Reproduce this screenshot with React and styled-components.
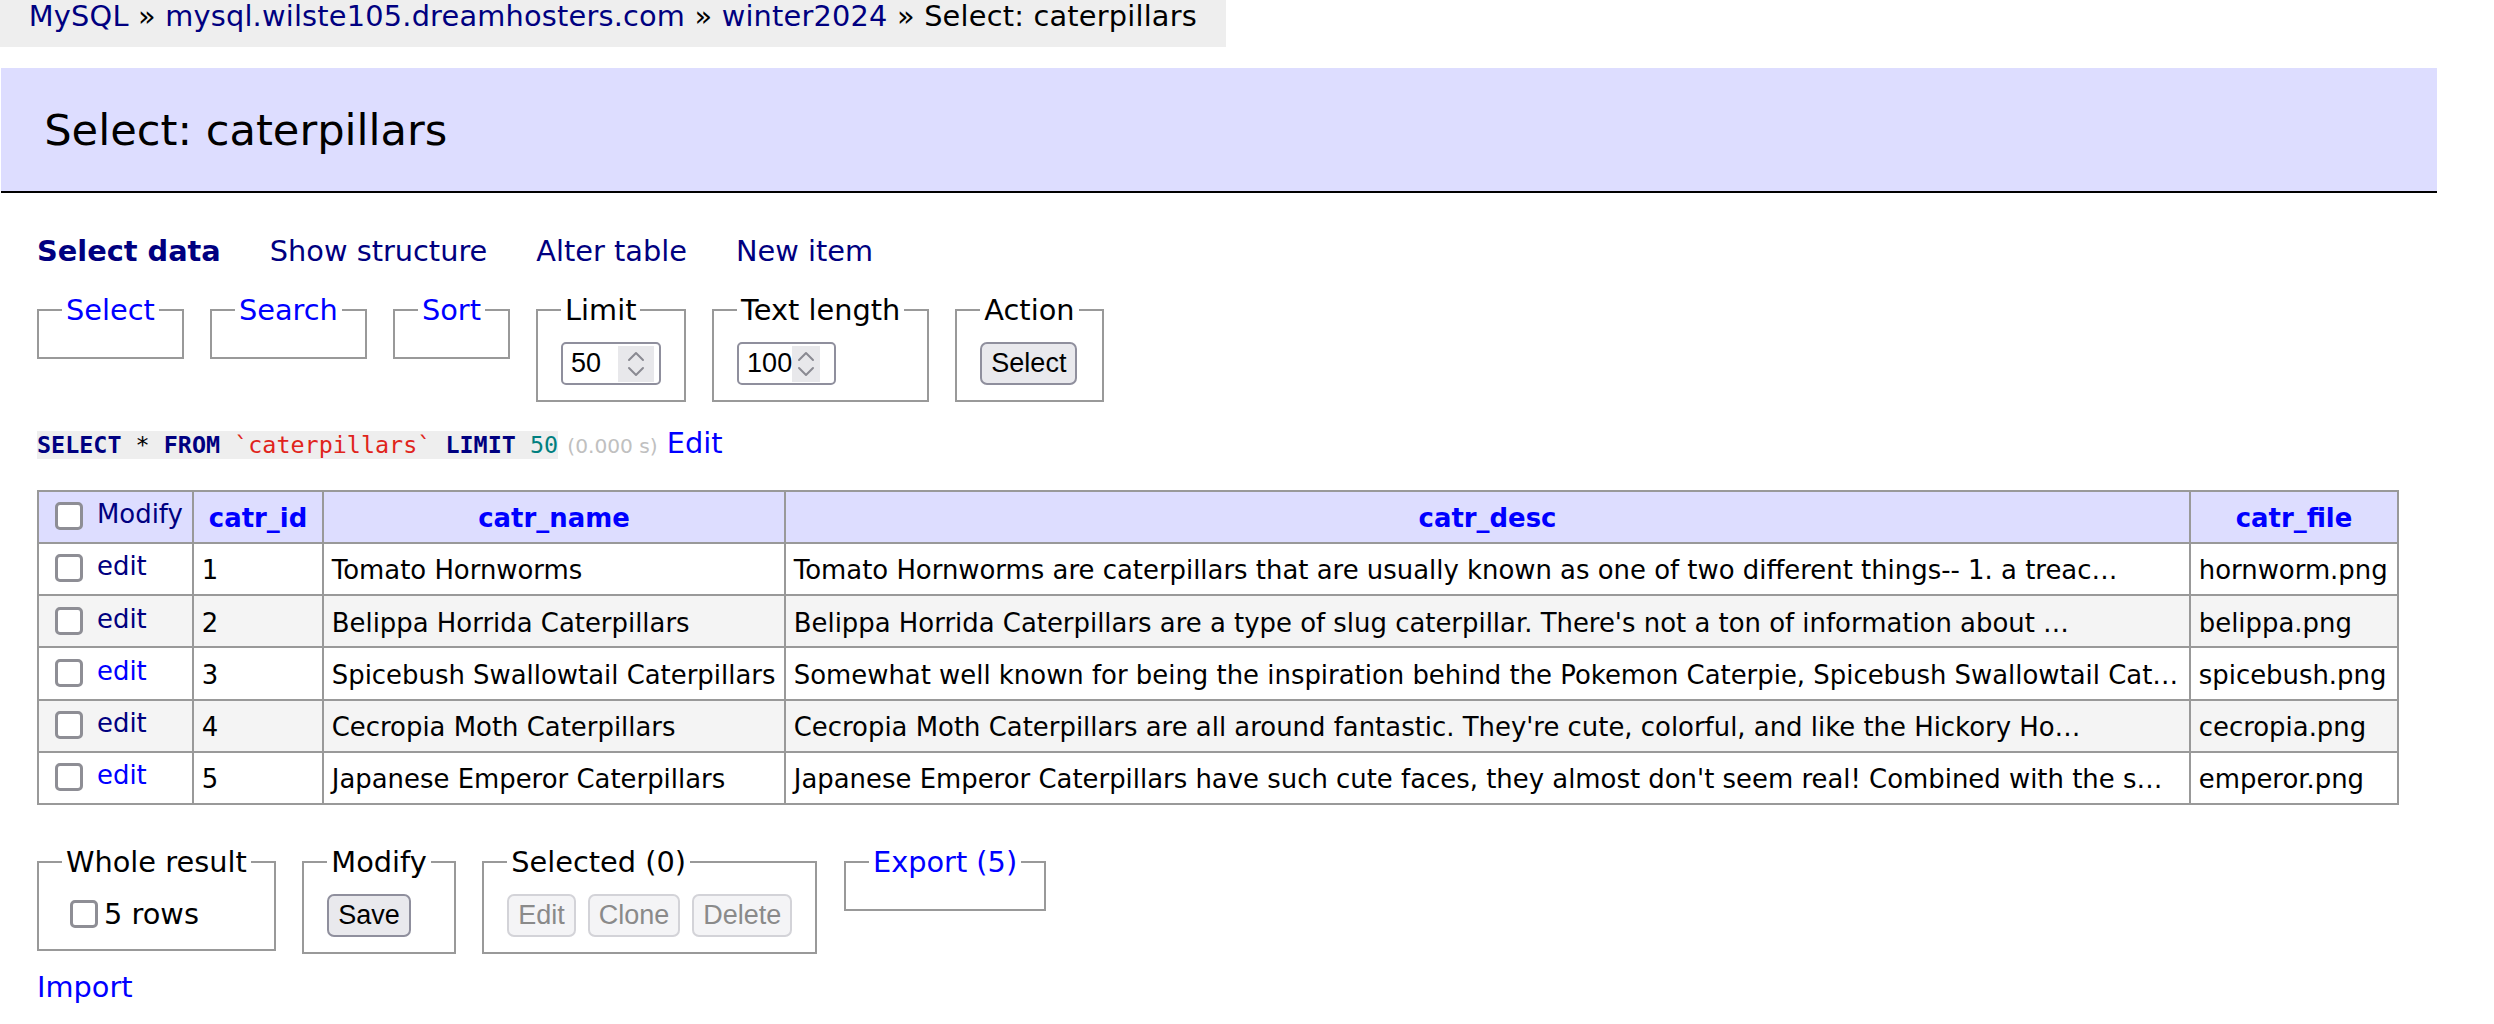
import React from "react";
import styled, { createGlobalStyle } from "styled-components";

const GlobalStyle = createGlobalStyle`
  html, body { margin: 0; padding: 0; background: #fff; }
  body {
    color: #000;
    font: 28.8px/36px "DejaVu Sans", Verdana, sans-serif;
  }
`;

const Page = styled.div`
  width: 2494px;
`;

const Breadcrumb = styled.div`
  width: fit-content;
  height: 47px;
  line-height: 33.5px;
  padding: 0 28.8px;
  background: #eee;
  white-space: nowrap;
  letter-spacing: 0.2px;
`;

const Crumb = styled.a`
  color: #000080;
  text-decoration: none;
`;

const Content = styled.div`
  margin-top: 21px;
  padding: 0 57px 0 37px;
`;

const Heading = styled.h2`
  margin: 0 0 40px -36px;
  padding: 34.56px 43.2px;
  font-size: 43.2px;
  line-height: 54px;
  font-weight: normal;
  background: #ddf;
  border-bottom: 2px solid #000;
`;

const Links = styled.p`
  display: flex;
  gap: 49px;
  margin: 0;
`;

const NavLink = styled.a`
  color: #000080;
  text-decoration: none;
  font-weight: ${(p) => (p.$active ? "bold" : "normal")};
`;

const FieldRow = styled.div`
  display: flex;
  align-items: flex-start;
  gap: ${(p) => p.$gap || "26px"};
  margin-top: ${(p) => p.$top || "0"};
`;

const Box = styled.fieldset`
  margin: 23px 0 0;
  padding: 14.4px 23.04px;
  border: 2px solid #999;
  min-inline-size: 0;
`;

const Legend = styled.legend`
  padding: 0 4px;
  line-height: 36px;
  color: #000;
`;

const BlueLink = styled.a`
  color: #00f;
  text-decoration: none;
`;

const NumberBox = styled.span`
  display: inline-flex;
  align-items: center;
  box-sizing: border-box;
  width: ${(p) => p.$w}px;
  height: 43px;
  padding-left: 8px;
  padding-right: ${(p) => p.$right}px;
  border: 2px solid #8f8f9d;
  border-radius: 5px;
  background: #fff;
  font: 27px/1 "Liberation Sans", Arial, sans-serif;
  color: #000;
  vertical-align: top;
`;

const NumberValue = styled.span`
  flex: 1;
`;

const Spinner = styled.span`
  display: flex;
  width: ${(p) => p.$w}px;
  height: 36px;
  background: #e8e8eb;
  align-items: center;
  justify-content: center;
`;

const Button = styled.button`
  box-sizing: border-box;
  height: 43px;
  padding: 0 9px;
  border: 2px solid ${(p) => (p.disabled ? "#d3d3d8" : "#8f8f9d")};
  border-radius: 7px;
  background: ${(p) => (p.disabled ? "#f4f4f6" : "#e9e9ed")};
  color: ${(p) => (p.disabled ? "#8a8a8a" : "#000")};
  font: 27px/1 "Liberation Sans", Arial, sans-serif;
  vertical-align: top;
`;

const ButtonRow = styled.div`
  display: flex;
  gap: 12px;
`;

const SqlLine = styled.p`
  margin: 23px 0 0;
`;

const Code = styled.code`
  font: 23.4px "DejaVu Sans Mono", Menlo, monospace;
  background: #eee;
`;

const Kw = styled.a`
  color: #000080;
  font-weight: bold;
  text-decoration: none;
`;

const Ident = styled.span`
  color: #e0241b;
`;

const Num = styled.span`
  color: #007f7f;
`;

const Time = styled.span`
  color: #c0c0c0;
  font-size: 20.16px;
`;

const Grid = styled.table`
  margin-top: 25.9px;
  border-collapse: collapse;
  table-layout: fixed;
  width: 2360px;
  font-size: 25.92px;
  line-height: 32.4px;
`;

const HeadRow = styled.tr`
  background: #ddf;
`;

const Row = styled.tr`
  background: ${(p) => (p.$alt ? "#f4f4f4" : "#fff")};
`;

const Cell = styled.td`
  border: 2px solid #999;
  padding: 10.4px 7.78px 7.4px;
  white-space: nowrap;
  overflow: hidden;
  text-align: left;
`;

const HeadCell = styled.th`
  border: 2px solid #999;
  padding: 10.4px 12.96px 7.4px;
  white-space: nowrap;
  overflow: hidden;
  text-align: center;
  font-weight: bold;
`;

const ColLink = styled.a`
  color: #00f;
  text-decoration: none;
`;

const RowLink = styled.a`
  color: ${(p) => (p.$visited ? "#000080" : "#00f")};
  text-decoration: none;
  line-height: 22px;
  vertical-align: 4px;
`;

const Check = styled.input.attrs({ type: "checkbox" })`
  appearance: none;
  -webkit-appearance: none;
  box-sizing: border-box;
  width: 28px;
  height: 28px;
  margin: 0 6px 0 8px;
  border: 3.5px solid #8e8e95;
  border-radius: 5px;
  background: #fff;
  vertical-align: ${(p) => p.$va || "-3px"};
`;

const CheckLabel = styled.label`
  display: block;
  line-height: 40px;
`;

const ImportLine = styled.p`
  margin: 15px 0 0;
`;

const SpinIcon = ({ w }) => {
  const c = w / 2;
  return (
    <svg width={w} height="36" viewBox={`0 0 ${w} 36`} fill="none">
      <path d={`M${c - 7} 14 L${c} 7 L${c + 7} 14`} stroke="#8a8a92" strokeWidth="2" strokeLinecap="round" strokeLinejoin="round" />
      <path d={`M${c - 7} 22 L${c} 29 L${c + 7} 22`} stroke="#8a8a92" strokeWidth="2" strokeLinecap="round" strokeLinejoin="round" />
    </svg>
  );
};

const rows = [
  {
    id: 1,
    name: "Tomato Hornworms",
    desc: "Tomato Hornworms are caterpillars that are usually known as one of two different things-- 1. a treac…",
    file: "hornworm.png",
    visited: true,
  },
  {
    id: 2,
    name: "Belippa Horrida Caterpillars",
    desc: "Belippa Horrida Caterpillars are a type of slug caterpillar. There's not a ton of information about …",
    file: "belippa.png",
    visited: true,
  },
  {
    id: 3,
    name: "Spicebush Swallowtail Caterpillars",
    desc: "Somewhat well known for being the inspiration behind the Pokemon Caterpie, Spicebush Swallowtail Cat…",
    file: "spicebush.png",
    visited: false,
  },
  {
    id: 4,
    name: "Cecropia Moth Caterpillars",
    desc: "Cecropia Moth Caterpillars are all around fantastic. They're cute, colorful, and like the Hickory Ho…",
    file: "cecropia.png",
    visited: true,
  },
  {
    id: 5,
    name: "Japanese Emperor Caterpillars",
    desc: "Japanese Emperor Caterpillars have such cute faces, they almost don't seem real! Combined with the s…",
    file: "emperor.png",
    visited: false,
  },
];

export default function App() {
  return (
    <Page>
      <GlobalStyle />
      <Breadcrumb>
        <Crumb href="#">MySQL</Crumb> » <Crumb href="#">mysql.wilste105.dreamhosters.com</Crumb> »{" "}
        <Crumb href="#">winter2024</Crumb> » Select: caterpillars
      </Breadcrumb>
      <Content>
        <Heading>Select: caterpillars</Heading>
        <Links>
          <NavLink href="#" $active>Select data</NavLink>
          <NavLink href="#">Show structure</NavLink>
          <NavLink href="#">Alter table</NavLink>
          <NavLink href="#">New item</NavLink>
        </Links>

        <FieldRow>
          <Box>
            <Legend><BlueLink href="#">Select</BlueLink></Legend>
          </Box>
          <Box>
            <Legend><BlueLink href="#">Search</BlueLink></Legend>
          </Box>
          <Box>
            <Legend><BlueLink href="#">Sort</BlueLink></Legend>
          </Box>
          <Box>
            <Legend>Limit</Legend>
            <NumberBox $w={100} $right={5}>
              <NumberValue>50</NumberValue>
              <Spinner $w={36}><SpinIcon w={36} /></Spinner>
            </NumberBox>
          </Box>
          <Box>
            <Legend>Text length</Legend>
            <NumberBox $w={99} $right={14}>
              <NumberValue>100</NumberValue>
              <Spinner $w={28}><SpinIcon w={28} /></Spinner>
            </NumberBox>
          </Box>
          <Box>
            <Legend>Action</Legend>
            <Button type="button">Select</Button>
          </Box>
        </FieldRow>

        <SqlLine>
          <Code>
            <Kw href="#">SELECT</Kw> * <Kw href="#">FROM</Kw> <Ident>`caterpillars`</Ident>{" "}
            <Kw href="#">LIMIT</Kw> <Num>50</Num>
          </Code>{" "}
          <Time>(0.000 s)</Time> <BlueLink href="#">Edit</BlueLink>
        </SqlLine>

        <Grid>
          <colgroup>
            <col style={{ width: 155 }} />
            <col style={{ width: 130 }} />
            <col style={{ width: 462 }} />
            <col style={{ width: 1405 }} />
            <col style={{ width: 208 }} />
          </colgroup>
          <thead>
            <HeadRow>
              <Cell as="td">
                <Check />{" "}
                <RowLink href="#" $visited>Modify</RowLink>
              </Cell>
              <HeadCell><ColLink href="#">catr_id</ColLink></HeadCell>
              <HeadCell><ColLink href="#">catr_name</ColLink></HeadCell>
              <HeadCell><ColLink href="#">catr_desc</ColLink></HeadCell>
              <HeadCell><ColLink href="#">catr_file</ColLink></HeadCell>
            </HeadRow>
          </thead>
          <tbody>
            {rows.map((r, i) => (
              <Row key={r.id} $alt={i % 2 === 1}>
                <Cell>
                  <Check />{" "}
                  <RowLink href="#" $visited={r.visited}>edit</RowLink>
                </Cell>
                <Cell>{r.id}</Cell>
                <Cell>{r.name}</Cell>
                <Cell>{r.desc}</Cell>
                <Cell>{r.file}</Cell>
              </Row>
            ))}
          </tbody>
        </Grid>

        <FieldRow $top="16px" $gap="26.5px">
          <Box>
            <Legend>Whole result</Legend>
            <CheckLabel>
              <Check $va="-4px" />5 rows
            </CheckLabel>
          </Box>
          <Box>
            <Legend>Modify</Legend>
            <Button type="button">Save</Button>
          </Box>
          <Box>
            <Legend>Selected (0)</Legend>
            <ButtonRow>
              <Button type="button" disabled>Edit</Button>
              <Button type="button" disabled>Clone</Button>
              <Button type="button" disabled>Delete</Button>
            </ButtonRow>
          </Box>
          <Box>
            <Legend><BlueLink href="#">Export (5)</BlueLink></Legend>
          </Box>
        </FieldRow>

        <ImportLine>
          <BlueLink href="#">Import</BlueLink>
        </ImportLine>
      </Content>
    </Page>
  );
}
